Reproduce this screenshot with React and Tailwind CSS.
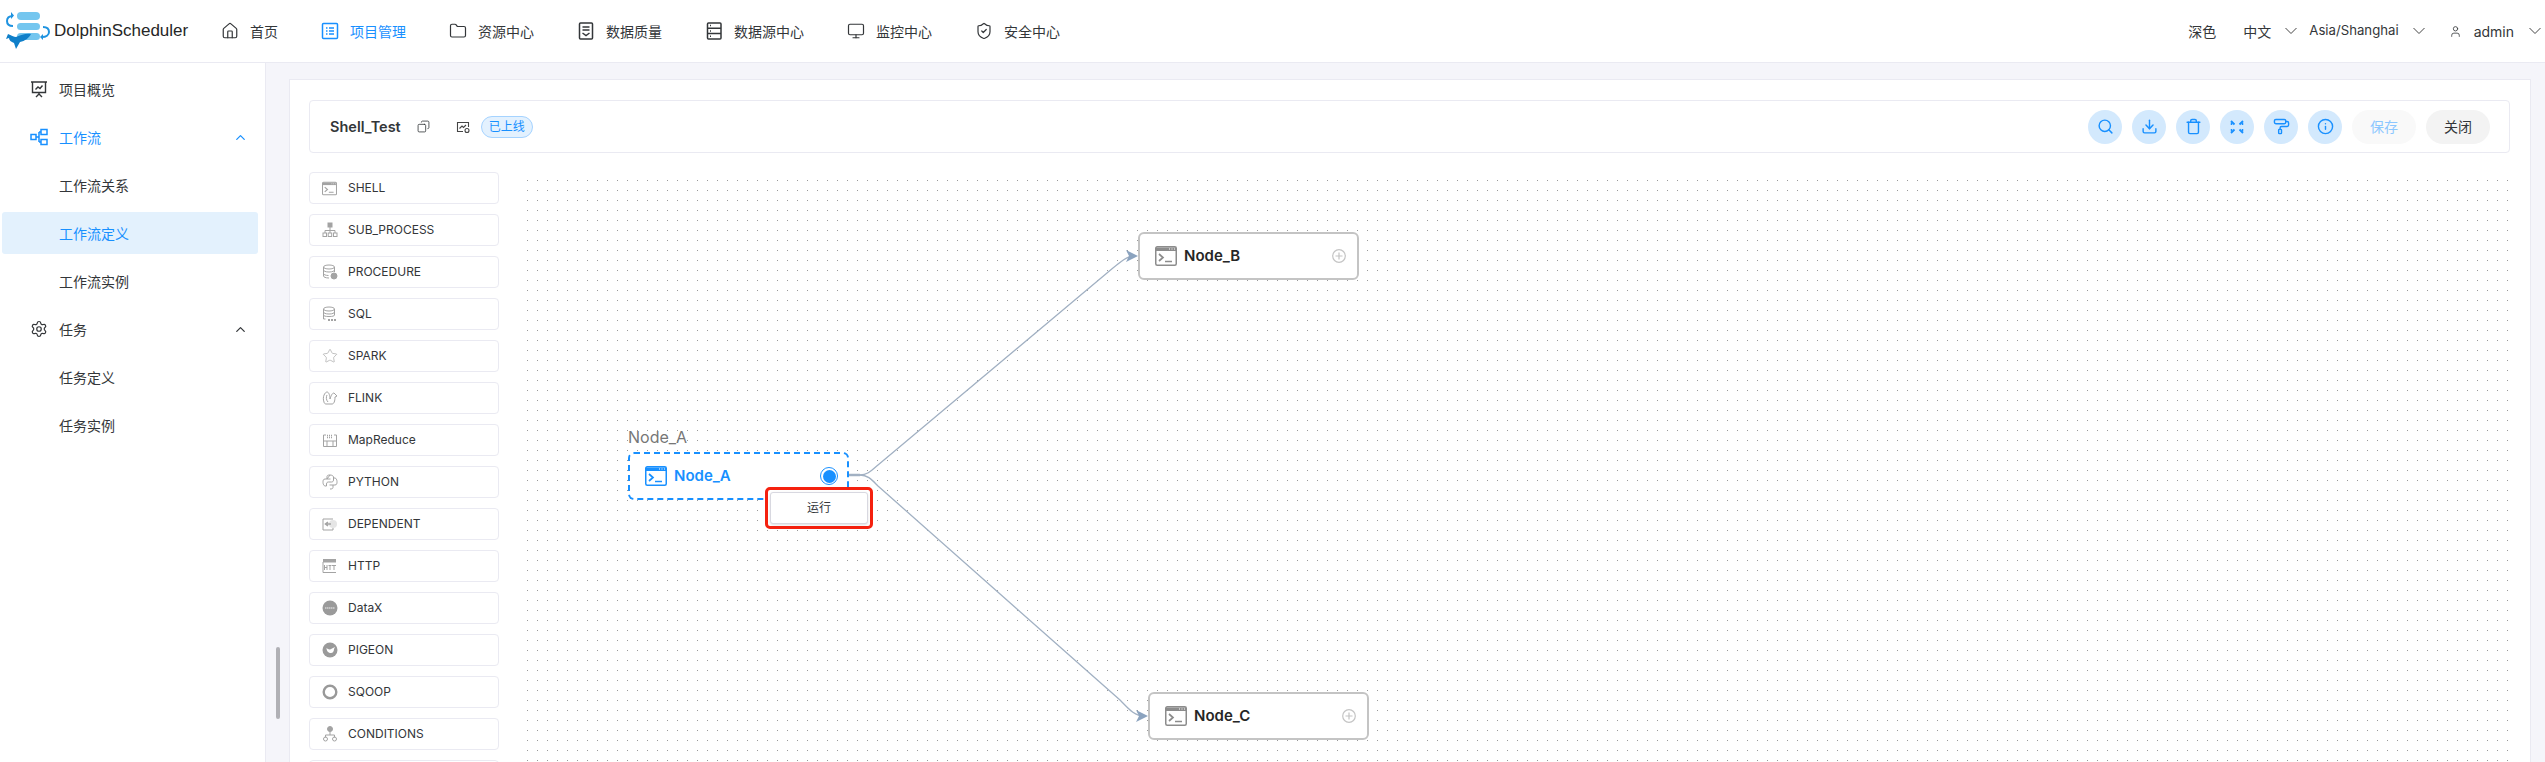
import { Home, Folder, Monitor, ShieldCheck, Search, Download, Trash, PaintRoller, Info, Settings, ChevronUp, User, Copy, Star } from "lucide-react";

const navItems = [
  { label: "首页", icon: <Home size={18} strokeWidth={1.6} /> },
  { label: "项目管理", active: true, icon: <ProjectIcon /> },
  { label: "资源中心", icon: <Folder size={18} strokeWidth={1.6} /> },
  { label: "数据质量", icon: <QualityIcon /> },
  { label: "数据源中心", icon: <SourceIcon /> },
  { label: "监控中心", icon: <Monitor size={18} strokeWidth={1.6} /> },
  { label: "安全中心", icon: <ShieldCheck size={18} strokeWidth={1.6} /> },
];

function ProjectIcon() {
  return (
    <svg width="18" height="18" viewBox="0 0 18 18" fill="none" stroke="currentColor" strokeWidth="1.5">
      <rect x="1.5" y="1.5" width="15" height="15" rx="1" />
      <path d="M5 6h1.5M5 9h1.5M5 12h1.5M8 6h5M8 9h5M8 12h5" />
    </svg>
  );
}

function QualityIcon() {
  return (
    <svg width="18" height="18" viewBox="0 0 18 18" fill="none" stroke="currentColor" strokeWidth="1.5">
      <rect x="2.5" y="1" width="13" height="16" rx="1" />
      <path d="M5.5 5h7M5.5 8h7M5.5 11l3.5 2.5 3.5-2.5" />
    </svg>
  );
}

function SourceIcon() {
  return (
    <svg width="18" height="18" viewBox="0 0 18 18" fill="none" stroke="currentColor" strokeWidth="1.5">
      <rect x="2.5" y="1" width="13.5" height="16" rx="1" />
      <path d="M2.5 6.3h13.5M2.5 11.6h13.5M5 3.6h1M5 9h1M5 14.3h1" />
    </svg>
  );
}

function Logo() {
  return (
    <svg width="52" height="52" viewBox="0 0 52 52" fill="none" className="shrink-0">
      <rect x="17" y="7" width="23" height="8" rx="4" fill="#74c6ef" />
      <rect x="17" y="18" width="23" height="7" rx="3.5" fill="#74c6ef" />
      <rect x="17" y="28" width="23" height="7" rx="3.5" fill="#74c6ef" />
      <path d="M13 11c-4 0-6 2-6 5 0 3 2 5 6 5" stroke="#1f93e0" strokeWidth="2" />
      <path d="M11 7v7l3-3.500z" fill="#1f93e0" />
      <path d="M43 22c4 0 6 2 6 5 0 3-3 5-7 5" stroke="#1f93e0" strokeWidth="2" />
      <path d="M43 29v6l-3-3z" fill="#1f93e0" />
      <path d="M8 29c3 1 6 3 8 3 5-2 10-4 15-3-2 4-6 7-11 8l-4 7-2-6c-3-1-5-3-5-5l-3 1z" fill="#0f7fc9" />
    </svg>
  );
}

function Chevron({ className }) {
  return (
    <svg width="12" height="8" viewBox="0 0 12 8" fill="none" stroke="#444" strokeWidth="1" className={className}>
      <path d="M0.500 1l5.500 5.500L11.500 1" />
    </svg>
  );
}

function ShellIcon({ className, size = 22 }) {
  return (
    <svg width={size} height={size} viewBox="0 0 22 22" fill="none" stroke="currentColor" className={className}>
      <rect x="0.75" y="1.75" width="20.5" height="18.5" rx="1.5" strokeWidth="1.5" />
      <path d="M1 2.5h20v3.5H1z" fill="currentColor" stroke="none" />
      <path d="M4 9l4 3.5L4 16M10 16.5h7" strokeWidth="1.7" />
      <path d="M14 4h1M16.5 4h1M19 4h1" stroke="#fff" strokeWidth="1" />
    </svg>
  );
}

const G = ({ children }) => (
  <svg width="16" height="16" viewBox="0 0 16 16" fill="none" stroke="#a3a3a3" strokeWidth="1">
    {children}
  </svg>
);

const taskItems = [
  { label: "SHELL", icon: <ShellIcon size={15} className="text-[#a3a3a3]" /> },
  {
    label: "SUB_PROCESS",
    icon: (
      <G>
        <rect x="6" y="1" width="4" height="4" fill="#a3a3a3" />
        <path d="M8 5v4M3 11V8.500h10V11M8 9v2" />
        <rect x="1" y="11" width="3.500" height="3.500" />
        <rect x="6.200" y="11" width="3.500" height="3.500" />
        <rect x="11.500" y="11" width="3.500" height="3.500" />
      </G>
    ),
  },
  {
    label: "PROCEDURE",
    icon: (
      <G>
        <ellipse cx="7" cy="3" rx="5.500" ry="2" />
        <path d="M1.500 3v9c0 1 2 2 5.500 2M12.500 3v5M1.500 6c0 1 2 2 5.500 2s5.500-1 5.500-2M1.500 9.500c0 1 2 2 5 2" />
        <circle cx="12" cy="12" r="3" fill="#a3a3a3" />
      </G>
    ),
  },
  {
    label: "SQL",
    icon: (
      <G>
        <ellipse cx="7" cy="3" rx="5.500" ry="2" />
        <path d="M1.500 3v10h2M12.500 3v6M1.500 6c0 1 2 2 5.500 2s5.500-1 5.500-2M1.500 9c0 1 2 1.500 5.500 1.500s5.500-.5 5.500-1.500" />
        <path d="M6 14h9" strokeWidth="1.800" strokeDasharray="2 1" />
      </G>
    ),
  },
  { label: "SPARK", icon: <Star size={16} strokeWidth={1} className="text-[#a3a3a3]" /> },
  {
    label: "FLINK",
    icon: (
      <G>
        <path d="M2 12C0 7 3 2 5 2c2 0 3 4 3 7 1-3 2-6 4-6l3 3-2 1c0 4-1 7-3 7H4c-1 0-2-1-2-2zM5 5c-1 2-1 5 1 7" />
      </G>
    ),
  },
  {
    label: "MapReduce",
    icon: (
      <G>
        <path d="M1.500 3v11.500h13V3M1.500 3H4M12 3h2.500M1.500 9h13M5 9v5.500M11 9v5.500" />
        <path d="M5 3.500h6M5 5.500h6" strokeDasharray="1 1" strokeWidth="1.500" />
      </G>
    ),
  },
  {
    label: "PYTHON",
    icon: (
      <G>
        <path d="M8 1c-3 0-3 1-3 2v2h3.500M5 5H3C1 5 1 7 1 8.500S2 12 3 12h1.500v-2c0-1.500 1-2 2-2h3c1 0 2-.500 2-2V3c0-1-1.500-2-3.500-2z" />
        <path d="M8 15c3 0 3-1 3-2v-2H7.500M11 11h2c2 0 2-2 2-3.500S14 4 13 4h-1.500" />
      </G>
    ),
  },
  {
    label: "DEPENDENT",
    icon: (
      <G>
        <path d="M11 3H1v11h10v-2" />
        <circle cx="11" cy="8" r="4" fill="#e5e5e5" stroke="none" />
        <path d="M9 8H3.500M6 6L3.500 8 6 10" strokeWidth="1.600" />
      </G>
    ),
  },
  {
    label: "HTTP",
    icon: (
      <G>
        <path d="M1 1h13v3.500H1z" fill="#a3a3a3" stroke="none" />
        <path d="M1 4v10.500h13" />
        <path d="M2.500 7v5M5 7v5M2.500 9.500H5M6.500 7.500h3M8 7.500V12M10 7.500h4M12 7.500V12" strokeWidth="1" />
      </G>
    ),
  },
  {
    label: "DataX",
    icon: (
      <G>
        <circle cx="8" cy="8" r="7.500" fill="#9a9a9a" stroke="none" />
        <path d="M3 8h10" stroke="#d4d4d4" strokeWidth="1.400" strokeDasharray="1.500 .5" />
      </G>
    ),
  },
  {
    label: "PIGEON",
    icon: (
      <G>
        <circle cx="8" cy="8" r="7.500" fill="#9a9a9a" stroke="none" />
        <path d="M4.500 6c0 3 2 5 4.500 5 2 0 3-2 3-4l1-2-3 1.500C8 8 6 7.500 4.500 6z" fill="#fff" stroke="none" />
      </G>
    ),
  },
  {
    label: "SQOOP",
    icon: (
      <G>
        <circle cx="8" cy="8" r="6.300" strokeWidth="2.400" stroke="#999" />
      </G>
    ),
  },
  {
    label: "CONDITIONS",
    icon: (
      <G>
        <circle cx="8" cy="3" r="2.500" fill="#a3a3a3" />
        <path d="M8 5.500V9M3.500 11.500V9h9v2.500" />
        <circle cx="3.500" cy="13" r="2" />
        <circle cx="12.500" cy="13" r="2" />
      </G>
    ),
  },
  { label: "", icon: null },
];

function FitIcon() {
  return (
    <svg width="16" height="16" viewBox="0 0 16 16" fill="none" stroke="currentColor" strokeWidth="1.800">
      <path d="M2 2l3.500 3.500M14 2l-3.500 3.500M2 14l3.500-3.500M14 14l-3.500-3.500" />
      <path d="M2.500 6V2.500H6M13.500 6V2.500H10M2.500 10v3.500H6M13.500 10v3.500H10" strokeDasharray="2.500 20" strokeWidth="1.500" />
    </svg>
  );
}

const circleButtons = [
  <Search size={17} />,
  <Download size={17} />,
  <Trash size={17} />,
  <FitIcon />,
  <PaintRoller size={17} />,
  <Info size={17} />,
];

function OverviewIcon() {
  return (
    <svg width="18" height="18" viewBox="0 0 18 18" fill="none" stroke="currentColor" strokeWidth="1.400">
      <path d="M1 2h16M2.500 2v10.500h13V2M9 12.500V14M6 17l3-3 3 3" />
      <path d="M5.500 9.500l2.500-2.500 2 1.500 2.500-3" />
    </svg>
  );
}

function WorkflowIcon() {
  return (
    <svg width="18" height="18" viewBox="0 0 18 18" fill="none" stroke="currentColor" strokeWidth="1.500">
      <rect x="1" y="6.500" width="5" height="5" />
      <rect x="11" y="1.500" width="6" height="5" />
      <rect x="11" y="11.500" width="6" height="5" />
      <path d="M6 9h3M9 4v10M9 4h2M9 14h2" />
    </svg>
  );
}

function SideRow({ icon, label, active, selected, chevron }) {
  return (
    <div
      className={`h-[42px] flex items-center rounded-[3px] ml-[2px] mr-[7px] ${
        selected ? "bg-[#e3f1fd]" : ""
      } ${active || selected ? "text-[#1890ff]" : "text-[#333639]"}`}
    >
      <div className="w-[57px] flex justify-end pr-[11px]">{icon}</div>
      <span className="flex-1 text-[14px]">{label}</span>
      {chevron && <ChevronUp size={15} strokeWidth={2} className="mr-[10px]" />}
    </div>
  );
}

function FlowNode({ name, className }) {
  return (
    <div className={`absolute w-[221px] h-[48px] bg-white rounded-[6px] border-2 border-[#c4c4c4] flex items-center pl-[15px] ${className}`}>
      <ShellIcon className="text-[#8c8c8c]" />
      <span className="ml-[7px] text-[15px] font-semibold text-[#262626]">{name}</span>
      <svg width="14" height="14" viewBox="0 0 14 14" fill="none" stroke="#c4c4c4" strokeWidth="1.200" className="ml-auto mr-[11px]">
        <circle cx="7" cy="7" r="6.300" />
        <path d="M3.500 7h7M7 3.500v7" />
      </svg>
    </div>
  );
}

export default function App() {
  return (
    <div className="w-[2545px] h-[762px] overflow-hidden bg-white text-[#333639] font-['Inter','Noto_Sans_CJK_SC',sans-serif] flex flex-col">
      {/* Header */}
      <header className="h-[63px] shrink-0 border-b border-[#eaeaf2] flex items-center">
        <div className="w-[221px] shrink-0 flex items-center">
          <Logo />
          <span className="text-[17px] text-[#262626] font-['Liberation_Sans',sans-serif] ml-[2px]">DolphinScheduler</span>
        </div>
        <nav className="flex items-center gap-[43px]">
          {navItems.map((n) => (
            <div key={n.label} className={`flex items-center gap-[11px] text-[14px] ${n.active ? "text-[#1890ff]" : "text-[#333639]"}`}>
              {n.icon}
              <span>{n.label}</span>
            </div>
          ))}
        </nav>
        <div className="ml-auto flex items-center text-[14px] pr-[4px]">
          <span>深色</span>
          <span className="ml-[27px]">中文</span>
          <Chevron className="ml-[14px]" />
          <span className="ml-[12px] text-[13.2px]">Asia/Shanghai</span>
          <Chevron className="ml-[14px]" />
          <User size={13} strokeWidth={1.5} className="ml-[24px]" />
          <span className="ml-[12px]">admin</span>
          <Chevron className="ml-[15px]" />
        </div>
      </header>

      <div className="flex-1 flex min-h-0">
        {/* Sidebar */}
        <aside className="w-[266px] shrink-0 border-r border-[#eaeaf2] pt-[5px]">
          <div className="flex flex-col gap-[6px]">
            <SideRow label="项目概览" icon={<OverviewIcon />} />
            <SideRow label="工作流" active chevron icon={<WorkflowIcon />} />
            <SideRow label="工作流关系" />
            <SideRow label="工作流定义" selected />
            <SideRow label="工作流实例" />
            <SideRow label="任务" chevron icon={<Settings size={18} strokeWidth={1.6} />} />
            <SideRow label="任务定义" />
            <SideRow label="任务实例" />
          </div>
        </aside>

        {/* Content */}
        <main className="relative flex-1 bg-[#f5f5fa] pt-[16px] pl-[23px] pr-[14px] min-w-0">
          <div className="absolute left-[10px] top-[584px] w-[4px] h-[72px] bg-[#b0b0b5] rounded-[2px]" />
          <div className="h-[800px] bg-white border border-[#eaeaf2] pl-[19px] pr-[20px] pt-[20px]">
            <div className="h-[53px] border border-[#eaeaf2] rounded-[4px] flex items-center pl-[20px] pr-[19px]">
              <span className="text-[14.5px] font-semibold">Shell_Test</span>
              <Copy size={13} strokeWidth={1.5} className="ml-[16px] -scale-x-100" />
              <svg width="14" height="14" viewBox="0 0 14 14" fill="none" stroke="#444" strokeWidth="1.100" className="ml-[26px]">
                <path d="M12.500 7V2.500h-11v9H7M3.500 8.500L6 6l1.500 1.500L10 5" />
                <circle cx="11" cy="10.500" r="2" />
              </svg>
              <span className="ml-[11px] h-[22px] px-[7px] rounded-full bg-[#e3f1fe] border border-[#a5d3ff] text-[#1890ff] text-[12px] flex items-center">已上线</span>
              <div className="ml-auto flex items-center gap-[10px]">
                {circleButtons.map((b, i) => (
                  <div key={i} className="w-[34px] h-[34px] rounded-full bg-[#d3e9fd] text-[#1890ff] flex items-center justify-center">
                    {b}
                  </div>
                ))}
                <div className="w-[64px] h-[34px] rounded-full bg-[#f9f9f9] text-[#8cc7ff] text-[14px] flex items-center justify-center">保存</div>
                <div className="w-[64px] h-[34px] rounded-full bg-[#f3f3f3] text-[#333639] text-[14px] flex items-center justify-center">关闭</div>
              </div>
            </div>

            <div className="flex mt-[19px]">
              <div className="w-[190px] shrink-0 flex flex-col gap-[10px]">
                {taskItems.map((t) => (
                  <div key={t.label} className="h-[32px] shrink-0 border border-[#eaeaf2] rounded-[4px] flex items-center pl-[12px] text-[12px] text-[#333639]">
                    <span className="w-[26px] flex items-center">{t.icon}</span>
                    <span>{t.label}</span>
                  </div>
                ))}
              </div>

              {/* Canvas */}
              <div className="relative ml-[23px] mt-[3px] w-[1990px] h-[640px] shrink-0 bg-[radial-gradient(circle_at_5.5px_5.5px,#999_0.6px,transparent_0.8px)] bg-[length:10px_10px]">
                <svg width="1990" height="640" className="absolute left-0 top-0" fill="none">
                  <path d="M327 300H338C346 300 350 295 356 290L585 98C596 89 604 81 612 81" stroke="#a2b1c3" strokeWidth="1.300" />
                  <path d="M327 300H338C346 300 350 305 356 311L598 525C606 533 612 541 622 541" stroke="#a2b1c3" strokeWidth="1.300" />
                  <path d="M616 81L604 75L607 81L604 87z" fill="#8ba3bf" />
                  <path d="M626 541L614 535L617 541L614 547z" fill="#8ba3bf" />
                  <path d="M327 300h11" stroke="#a2b1c3" strokeWidth="2.500" />
                </svg>
                <span className="absolute left-[106px] top-[250px] text-[16px] text-[#777]">Node_A</span>
                <div className="absolute left-[106px] top-[277px] w-[221px] h-[48px] rounded-[6px] border-2 border-dashed border-[#1890ff] bg-white flex items-center pl-[15px] text-[#1890ff]">
                  <ShellIcon />
                  <span className="ml-[7px] text-[15px] font-semibold">Node_A</span>
                  <span className="ml-auto mr-[9px] w-[18px] h-[18px] rounded-full border-[1.500px] border-[#1890ff] flex items-center justify-center">
                    <span className="w-[13px] h-[13px] rounded-full bg-[#1890ff]" />
                  </span>
                </div>
                <FlowNode name="Node_B" className="left-[616px] top-[57px]" />
                <FlowNode name="Node_C" className="left-[626px] top-[517px]" />
                <div className="absolute left-[243px] top-[312px] w-[108px] h-[42px] rounded-[5px] border-[3px] border-[#f5210f] bg-white p-[2px]">
                  <div className="h-full rounded-[3px] border border-[#d8d8e0] bg-white shadow-sm flex items-center justify-center text-[12px] text-[#333639]">运行</div>
                </div>
              </div>
            </div>
          </div>
        </main>
      </div>
    </div>
  );
}
